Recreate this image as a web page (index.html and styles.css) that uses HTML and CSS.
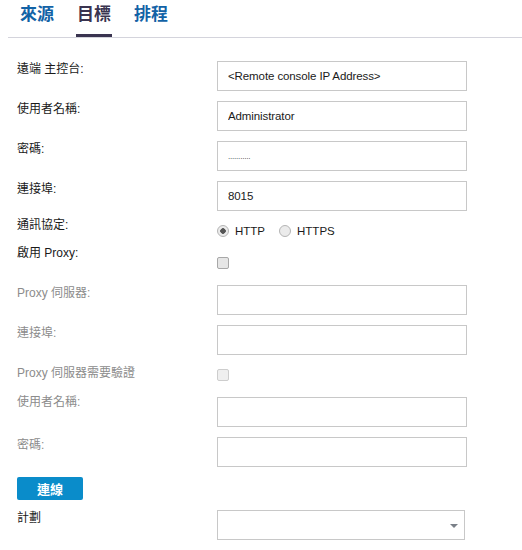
FILE: index.html
```html
<!DOCTYPE html>
<html lang="zh-TW">
<head>
    <meta charset="UTF-8">
    <title>目標</title>
    <link rel="stylesheet" href="styles.css">
</head>
<body>
    <div class="tabs">
        <a class="tab">來源</a>
        <a class="tab active">目標</a>
        <a class="tab">排程</a>
    </div>

    <div class="form">
        <div class="row">
            <label class="label">遠端 主控台:</label>
            <input class="field" type="text" value="<Remote console IP Address>">
        </div>
        <div class="row">
            <label class="label">使用者名稱:</label>
            <input class="field" type="text" value="Administrator">
        </div>
        <div class="row">
            <label class="label">密碼:</label>
            <input class="field masked" type="text" value="...........">
        </div>
        <div class="row">
            <label class="label">連接埠:</label>
            <input class="field" type="text" value="8015">
        </div>
        <div class="row row-radio">
            <label class="label">通訊協定:</label>
            <div class="options">
                <label class="option"><input type="radio" name="proto" checked> HTTP</label>
                <label class="option"><input type="radio" name="proto"> HTTPS</label>
            </div>
        </div>
        <div class="row row-check">
            <label class="label">啟用 Proxy:</label>
            <input class="check" type="checkbox">
        </div>
        <div class="row after-check disabled">
            <label class="label">Proxy 伺服器:</label>
            <input class="field" type="text" disabled>
        </div>
        <div class="row disabled">
            <label class="label">連接埠:</label>
            <input class="field" type="text" disabled>
        </div>
        <div class="row row-check2 disabled">
            <label class="label">Proxy 伺服器需要驗證</label>
            <input class="check" type="checkbox" disabled>
        </div>
        <div class="row after-check disabled">
            <label class="label raised">使用者名稱:</label>
            <input class="field" type="text" disabled>
        </div>
        <div class="row disabled">
            <label class="label">密碼:</label>
            <input class="field" type="password" disabled>
        </div>
        <div class="row">
            <button class="btn">連線</button>
        </div>
        <div class="row">
            <label class="label">計劃</label>
            <div class="select"><span class="arrow"></span></div>
        </div>
    </div>
</body>
</html>
```

FILE: styles.css
```css
body {
    margin: 0;
    background-color: #fff;
    font-family: "Liberation Sans", "Noto Sans CJK TC", sans-serif;
    color: #1a1a1a;
}
.tabs {
    display: flex;
    gap: 21px;
    margin-left: 8px;
    padding-left: 11px;
    border-bottom: 1px solid #d4d4dc;
}
.tab {
    padding: 5px 1px 9px;
    font-size: 17px;
    line-height: 20px;
    font-weight: bold;
    color: #1262a6;
    border-bottom: 3px solid transparent;
}
.tab.active {
    color: #3a3450;
    border-bottom-color: #3a3450;
}
.form {
    display: flex;
    flex-direction: column;
    gap: 10px;
    padding: 23px 0 0 17px;
}
.row {
    display: flex;
    align-items: flex-start;
}
.label {
    width: 200px;
    padding-top: 1px;
    font-size: 12px;
    line-height: 14px;
}
.label.raised {
    margin-top: -3px;
}
.field {
    box-sizing: border-box;
    width: 250px;
    height: 30px;
    margin: 0;
    padding: 0 10px;
    border: 1px solid #c8c8c8;
    border-radius: 0;
    background: #fff;
    font-family: "Liberation Sans", sans-serif;
    font-size: 11.5px;
    letter-spacing: -0.1px;
    color: #1a1a1a;
    outline: none;
}
.field.masked {
    font-size: 8px;
    letter-spacing: -0.2px;
    color: #333;
}
.row-radio {
    margin-top: -4px;
}
.options {
    display: flex;
    gap: 14px;
    height: 14px;
    margin-top: 7px;
}
.option {
    display: flex;
    align-items: center;
    gap: 6px;
    font-size: 11.5px;
}
.option input {
    appearance: none;
    width: 12px;
    height: 12px;
    margin: 0;
    border: 1px solid #b4b4b4;
    border-radius: 50%;
    background: #ebebeb;
}
.option input:checked {
    background: radial-gradient(circle, #555 0 2.5px, #ebebeb 3px);
}
.check {
    appearance: none;
    width: 12px;
    height: 12px;
    margin: 12px 0 0;
    border: 1px solid #a8a8a8;
    border-radius: 2px;
    background: #e6e6e6;
}
.check:disabled {
    border-color: #cdcdcd;
    background: #efefef;
}
.row-check {
    margin-top: -3px;
}
.row-check2 .check {
    margin-top: 4px;
}
.after-check {
    margin-top: 6px;
}
.disabled .label {
    color: #8c8c8c;
}
.disabled .field {
    background: #fff;
}
.btn {
    width: 66px;
    height: 23px;
    padding: 0;
    border: none;
    border-radius: 2px;
    background-color: #0a8cca;
    color: #fff;
    font-family: "Noto Sans CJK TC", sans-serif;
    font-size: 13px;
    font-weight: bold;
    line-height: 23px;
}
.select {
    position: relative;
    box-sizing: border-box;
    width: 248px;
    height: 30px;
    border: 1px solid #c8c8c8;
}
.select .arrow {
    position: absolute;
    right: 6px;
    top: 13px;
    width: 0;
    height: 0;
    border-left: 4px solid transparent;
    border-right: 4px solid transparent;
    border-top: 4px solid #7a8088;
}
```
